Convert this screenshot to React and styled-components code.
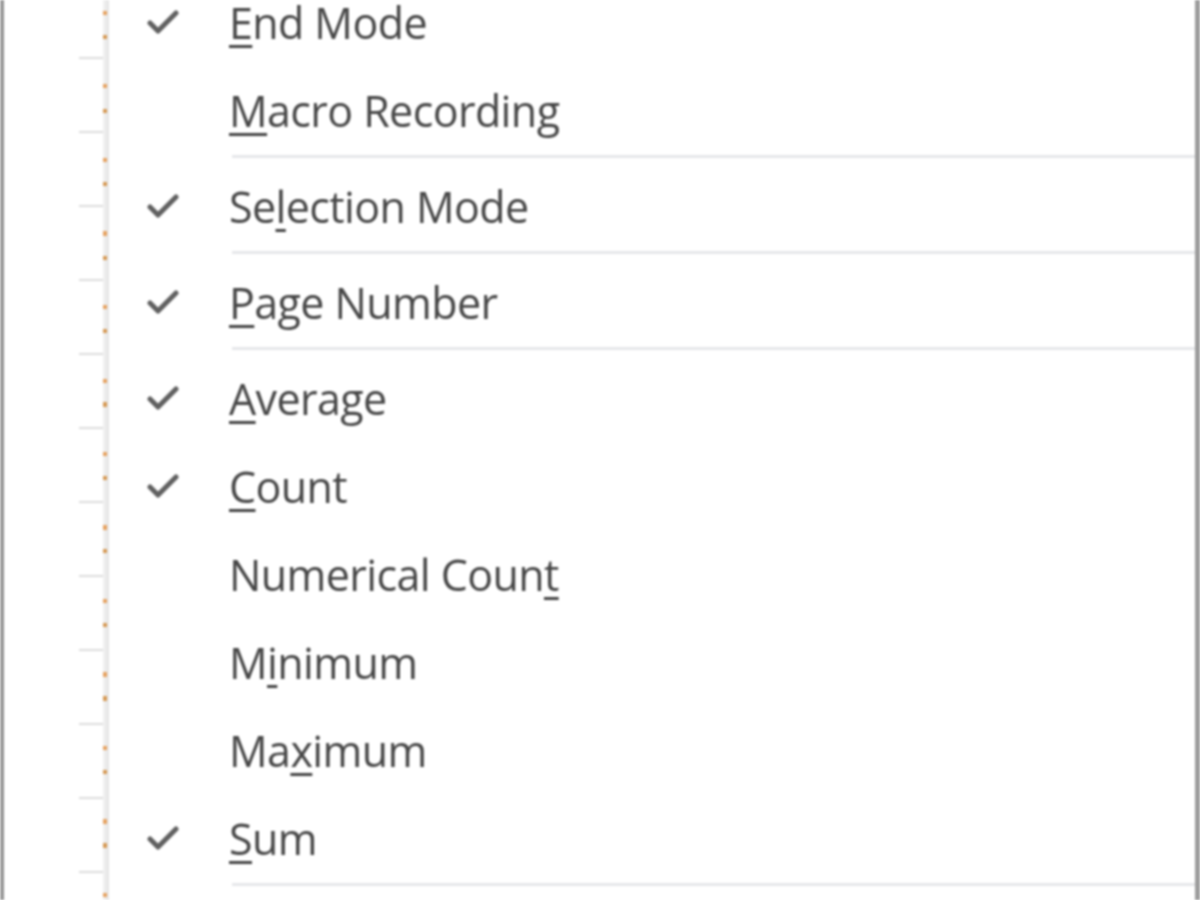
import React from 'react';
import styled, { createGlobalStyle } from 'styled-components';

const GlobalStyle = createGlobalStyle`
  html, body {
    margin: 0;
    padding: 0;
    background: #ffffff;
  }
  body {
    font-family: "Open Sans", "Noto Sans", "Liberation Sans", sans-serif;
  }
`;

const Page = styled.div`
  display: flex;
  width: 1200px;
  height: 900px;
  overflow: hidden;
  background: #ffffff;
  filter: blur(0.9px);
`;

const FrameEdge = styled.div`
  flex: 0 0 4px;
  background: linear-gradient(to right, #b4b4b4, #8c8c8c 60%, #9a9a9a);
`;

// row gridlines of the sheet peeking out behind the menu
const SheetStrip = styled.div`
  flex: 0 0 99px;
  background-color: #ffffff;
  background-image: repeating-linear-gradient(
    to bottom,
    transparent 0 72px,
    #dcdcdc 72px 74px,
    transparent 74px 73.5px
  );
  background-size: 24px 100%;
  background-position: right -15px;
  background-repeat: no-repeat;
`;

const Gutter = styled.div`
  flex: 0 0 6px;
  background-color: #ececec;
  background-image:
    repeating-linear-gradient(
      to bottom,
      transparent 0 11px,
      #e6a261 11px 15px,
      transparent 15px 35px,
      #d69a55 35px 39px,
      transparent 39px 73.5px
    ),
    linear-gradient(to right, #f3f3f3, #e3e3e3);
  background-size: 4px 100%, 100% 100%;
  background-position: 0 0, 0 0;
  background-repeat: no-repeat;
`;

const Menu = styled.ul`
  flex: 1;
  list-style: none;
  margin: -22px 0 0;
  padding: 0;
  border-right: 5px solid #9c9c9c;
  background: #ffffff;
`;

const Item = styled.li`
  display: flex;
  align-items: center;
  height: 88px;
`;

const CheckCell = styled.div`
  flex: 0 0 120px;
  display: flex;
  align-items: center;
  padding-left: 38px;
  box-sizing: border-box;
`;

const Label = styled.span`
  font-size: 43px;
  line-height: 1;
  color: #474747;
  letter-spacing: -0.6px;
  white-space: nowrap;
`;

const Key = styled.span`
  text-decoration: underline;
  text-decoration-thickness: 3px;
  text-underline-offset: 6px;
  text-decoration-color: #444;
`;

const Separator = styled.li`
  height: 3px;
  margin: 1px 0 4px 123px;
  background: #e6e7ea;
`;

const Check = () => (
  <svg width="32" height="26" viewBox="0 0 32 26">
    <path d="M3 14 L11 22 L29 4" fill="none" stroke="#606060" strokeWidth="5" strokeLinecap="round" strokeLinejoin="round" />
  </svg>
);

// label split into [before, accessKey, after]
const entries = [
  { parts: ['', 'E', 'nd Mode'], checked: true },
  { parts: ['', 'M', 'acro Recording'], checked: false, sep: true },
  { parts: ['Se', 'l', 'ection Mode'], checked: true, sep: true },
  { parts: ['', 'P', 'age Number'], checked: true, sep: true },
  { parts: ['', 'A', 'verage'], checked: true },
  { parts: ['', 'C', 'ount'], checked: true },
  { parts: ['Numerical Coun', 't', ''], checked: false },
  { parts: ['M', 'i', 'nimum'], checked: false },
  { parts: ['Ma', 'x', 'imum'], checked: false },
  { parts: ['', 'S', 'um'], checked: true, sep: true },
];

export default function App() {
  return (
    <>
      <GlobalStyle />
      <Page>
        <FrameEdge />
        <SheetStrip />
        <Gutter />
        <Menu>
          {entries.map((e, i) => (
            <React.Fragment key={i}>
              <Item>
                <CheckCell>{e.checked && <Check />}</CheckCell>
                <Label>
                  {e.parts[0]}
                  <Key>{e.parts[1]}</Key>
                  {e.parts[2]}
                </Label>
              </Item>
              {e.sep && <Separator />}
            </React.Fragment>
          ))}
        </Menu>
      </Page>
    </>
  );
}
